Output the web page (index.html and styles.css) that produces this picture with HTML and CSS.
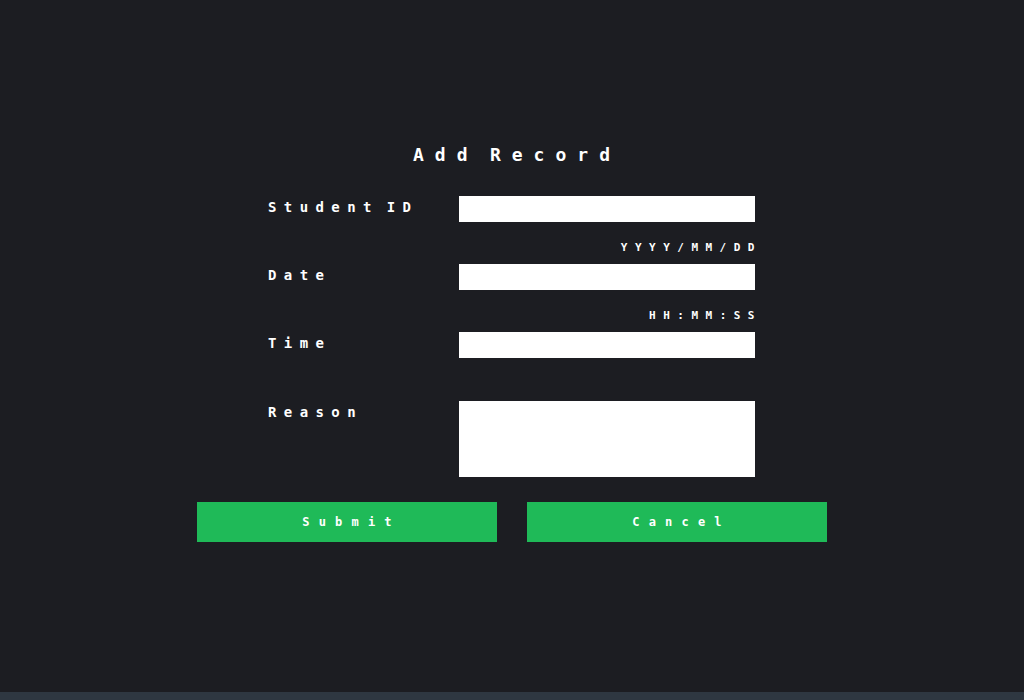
FILE: index.html
```html
<!DOCTYPE html>
<html lang="en">
<head>
<meta charset="utf-8">
<title>Add Record</title>
<link rel="stylesheet" href="styles.css">
</head>
<body>
<main class="page">
  <form class="record-form">
    <h1 class="title">Add Record</h1>
    <div class="fields">
      <div class="row">
        <label class="label" for="sid">Student ID</label>
        <input class="input" id="sid" type="text">
      </div>
      <div class="hint">YYYY/MM/DD</div>
      <div class="row">
        <label class="label" for="date">Date</label>
        <input class="input" id="date" type="text">
      </div>
      <div class="hint">HH:MM:SS</div>
      <div class="row">
        <label class="label" for="time">Time</label>
        <input class="input" id="time" type="text">
      </div>
      <div class="hint hint-empty"></div>
      <div class="row">
        <label class="label" for="reason">Reason</label>
        <textarea class="input textarea" id="reason"></textarea>
      </div>
    </div>
    <div class="actions">
      <button type="button" class="btn">Submit</button>
      <button type="button" class="btn">Cancel</button>
    </div>
  </form>
</main>
<div class="bottom-bar"></div>
</body>
</html>
```

FILE: styles.css
```css
html, body {
  margin: 0;
  padding: 0;
}
body {
  width: 1024px;
  height: 700px;
  background: #1c1d22;
  color: #ffffff;
  font-family: "DejaVu Sans Mono", "Liberation Mono", monospace;
  font-weight: bold;
  display: flex;
  flex-direction: column;
  overflow: hidden;
}
.page {
  flex: 1;
  padding-top: 144px;
}
.record-form {
  width: 630px;
  margin: 0 auto;
}
.title {
  margin: 0 0 30px 0;
  font-size: 18px;
  line-height: 22px;
  letter-spacing: 11px;
  word-spacing: -10.4px;
  padding-left: 10px;
  text-align: center;
  font-weight: bold;
}
.fields {
  width: 487px;
  margin-left: 71px;
}
.row {
  display: flex;
  align-items: flex-start;
}
.label {
  width: 191px;
  flex: none;
  font-size: 14px;
  line-height: 22px;
  letter-spacing: 7.4px;
  word-spacing: -8px;
}
.input {
  display: block;
  width: 296px;
  height: 26px;
  border: 0;
  margin: 0;
  padding: 0;
  background: #ffffff;
  box-sizing: border-box;
  outline: none;
}
.textarea {
  height: 76px;
  resize: none;
}
.hint {
  font-size: 11px;
  line-height: 14px;
  height: 14px;
  letter-spacing: 7.5px;
  text-align: right;
  margin: 19px -7px 9px 0;
}
.hint-empty {
  margin-top: 20px;
}
.actions {
  display: flex;
  gap: 30px;
  margin-top: 25px;
}
.btn {
  width: 300px;
  height: 40px;
  border: 0;
  margin: 0;
  padding: 0 0 0 9px;
  background: #1fba58;
  color: #ffffff;
  font-family: "DejaVu Sans Mono", "Liberation Mono", monospace;
  font-weight: bold;
  font-size: 12px;
  letter-spacing: 9.2px;
  cursor: pointer;
}
.bottom-bar {
  height: 8px;
  flex: none;
  background: #2e3741;
}
```
